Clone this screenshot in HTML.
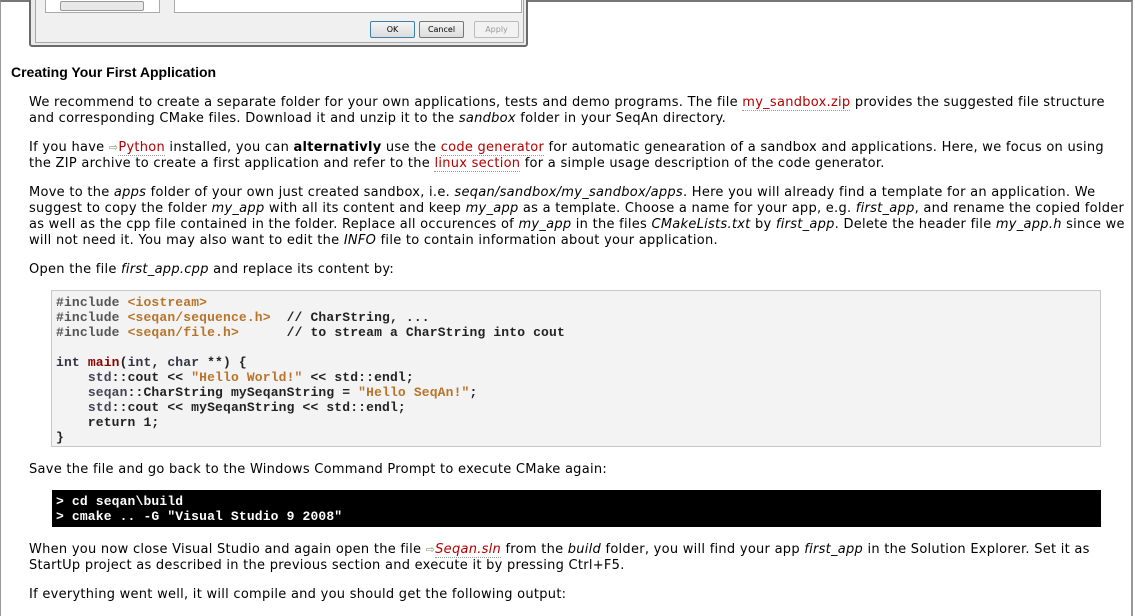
<!DOCTYPE html>
<html><head><style>
html,body{margin:0;padding:0;}
body{width:1135px;height:616px;overflow:hidden;background:#fff;position:relative;font-family:"DejaVu Sans",Verdana,sans-serif;font-size:13px;color:#000;}
.frame{position:absolute;left:0;top:0;width:1133px;height:616px;border-left:1px solid #999;border-right:2px solid #999;border-top:2px solid #777;box-sizing:border-box;}
.dlg{position:absolute;left:29px;top:-4px;width:499px;height:51px;background:#e9eaec;border:2px solid #6a6a6a;border-radius:3px;box-sizing:border-box;}
.inner{position:absolute;left:4px;top:0;width:487px;height:43px;background:#f0f0f0;border:1px solid #a6a6a6;}
.sb{position:absolute;left:9px;top:0;width:113px;height:12px;background:#fff;border:1px solid #aaa;}
.sb i{position:absolute;left:14px;top:1px;width:82px;height:8px;border:1px solid #999;border-radius:2px;background:#e8e8e8;}
.lb{position:absolute;left:138px;top:0;width:346px;height:12px;background:#fff;border:1px solid #aaa;}
.btn{position:absolute;top:22px;width:43px;height:15px;border:1px solid #777;border-radius:2px;background:linear-gradient(#f4f4f4,#dcdcdc);font-size:8px;text-align:center;line-height:15px;color:#000;}
h3{position:absolute;left:11px;top:64px;margin:0;font-family:"Liberation Sans",Arial,sans-serif;font-weight:bold;font-size:14px;}
p{position:absolute;left:29px;margin:0;width:1080px;line-height:16px;letter-spacing:0.27px;}
a{color:#b20000;text-decoration:none;border-bottom:1px dotted #999;}
.ar{color:#8a9a70;font-size:11px;}
pre{position:absolute;margin:0;font-family:"Liberation Mono","Courier New",monospace;font-size:13px;line-height:15px;font-weight:bold;letter-spacing:0.15px;}
.code{left:51px;top:290px;width:1050px;height:157px;background:#f3f3f3;border:1px solid #c8c8c8;box-sizing:border-box;padding:4px 0 0 4px;color:#222;}
.pp{color:#555;}.st{color:#b8742a;}.kw{color:#334;}.fn{color:#8b0000;}.ns{color:#445;}
.term{left:52px;top:490px;width:1049px;height:37px;background:#000;color:#fff;padding:4px 0 0 4px;box-sizing:border-box;}
</style></head><body>
<div class="frame"></div>
<div class="dlg"><div class="inner">
<div class="sb"><i></i></div><div class="lb"></div>
<div class="btn" style="left:334px;border-color:#3c7fb1;">OK</div>
<div class="btn" style="left:383px;">Cancel</div>
<div class="btn" style="left:438px;color:#999;border-color:#bbb;background:#f2f2f2;">Apply</div>
</div></div>
<h3>Creating Your First Application</h3>
<p style="top:95px">We recommend to create a separate folder for your own applications, tests and demo programs. The file <a>my_sandbox.zip</a> provides the suggested file structure and corresponding CMake files. Download it and unzip it to the <i>sandbox</i> folder in your SeqAn directory.</p>
<p style="top:140px">If you have <span class="ar">⇨</span><a>Python</a> installed, you can <b>alternativly</b> use the <a>code generator</a> for automatic genearation of a sandbox and applications. Here, we focus on using the ZIP archive to create a first application and refer to the <a>linux section</a> for a simple usage description of the code generator.</p>
<p style="top:185px;width:1098px">Move to the <i>apps</i> folder of your own just created sandbox, i.e. <i>seqan/sandbox/my_sandbox/apps</i>. Here you will already find a template for an application. We suggest to copy the folder <i>my_app</i> with all its content and keep <i>my_app</i> as a template. Choose a name for your app, e.g. <i>first_app</i>, and rename the copied folder as well as the cpp file contained in the folder. Replace all occurences of <i>my_app</i> in the files <i>CMakeLists.txt</i> by <i>first_app</i>. Delete the header file <i>my_app.h</i> since we will not need it. You may also want to edit the <i>INFO</i> file to contain information about your application.</p>
<p style="top:262px">Open the file <i>first_app.cpp</i> and replace its content by:</p>
<pre class="code"><span class="pp">#include</span> <span class="st">&lt;iostream&gt;</span>
<span class="pp">#include</span> <span class="st">&lt;seqan/sequence.h&gt;</span>  // CharString, ...
<span class="pp">#include</span> <span class="st">&lt;seqan/file.h&gt;</span>      // to stream a CharString into cout

<span class="kw">int</span> <span class="fn">main</span>(<span class="kw">int</span>, <span class="kw">char</span> **) {
    <span class="ns">std</span>::cout &lt;&lt; <span class="st">"Hello World!"</span> &lt;&lt; std::endl;
    <span class="ns">seqan</span>::CharString mySeqanString = <span class="st">"Hello SeqAn!"</span>;
    <span class="ns">std</span>::cout &lt;&lt; mySeqanString &lt;&lt; std::endl;
    return 1;
}</pre>
<p style="top:462px">Save the file and go back to the Windows Command Prompt to execute CMake again:</p>
<pre class="term">&gt; cd seqan\build
&gt; cmake .. -G "Visual Studio 9 2008"</pre>
<p style="top:542px">When you now close Visual Studio and again open the file <span class="ar">⇨</span><a><i>Seqan.sln</i></a> from the <i>build</i> folder, you will find your app <i>first_app</i> in the Solution Explorer. Set it as StartUp project as described in the previous section and execute it by pressing Ctrl+F5.</p>
<p style="top:587px">If everything went well, it will compile and you should get the following output:</p>
</body></html>
